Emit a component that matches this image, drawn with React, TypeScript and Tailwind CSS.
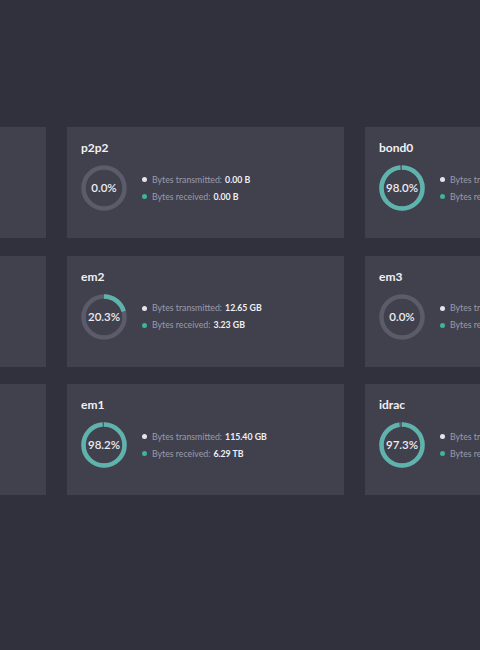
import React from 'react';

type Iface = {
  name: string;
  pct: number;
  tx: string;
  rx: string;
};

// left column is cut off by the window, it still gets real content
const rows: Iface[][] = [
  [
    { name: 'p2p1', pct: 0, tx: '0.00 B', rx: '0.00 B' },
    { name: 'p2p2', pct: 0, tx: '0.00 B', rx: '0.00 B' },
    { name: 'bond0', pct: 98.0, tx: '128.05 GB', rx: '6.29 TB' },
  ],
  [
    { name: 'lo', pct: 50.0, tx: '1.02 GB', rx: '1.02 GB' },
    { name: 'em2', pct: 20.3, tx: '12.65 GB', rx: '3.23 GB' },
    { name: 'em3', pct: 0, tx: '0.00 B', rx: '0.00 B' },
  ],
  [
    { name: 'em4', pct: 0, tx: '0.00 B', rx: '0.00 B' },
    { name: 'em1', pct: 98.2, tx: '115.40 GB', rx: '6.29 TB' },
    { name: 'idrac', pct: 97.3, tx: '2.10 GB', rx: '75.80 GB' },
  ],
];

const Ring: React.FC<{ pct: number }> = ({ pct }) => {
  const r = 20.5;
  const c = 2 * Math.PI * r;
  const len = (pct / 100) * c;
  return (
    <div className="relative w-[46px] h-[46px] shrink-0">
      <svg width="46" height="46" viewBox="0 0 46 46">
        <circle cx="23" cy="23" r={r} fill="none" stroke="#5b5b6a" strokeWidth="4.5" />
        {pct > 0 && (
          <circle
            cx="23"
            cy="23"
            r={r}
            fill="none"
            stroke="#5fb3ad"
            strokeWidth="4.5"
            strokeDasharray={`${len} ${c}`}
            transform="rotate(-90 23 23)"
          />
        )}
      </svg>
      <div className="absolute inset-0 flex items-center justify-center text-[11.5px] font-semibold text-[#ececf2]">
        {pct.toFixed(1)}%
      </div>
    </div>
  );
};

const Card: React.FC<{ data: Iface }> = ({ data }) => (
  <div className="h-[111px] bg-[#41414d] pl-[14px] pt-[12px]">
    <div className="text-[12px] font-bold text-[#f0f0f4] leading-[18px]">{data.name}</div>
    <div className="flex items-center mt-[8px]">
      <Ring pct={data.pct} />
      <div className="ml-[15px] flex flex-col gap-[5px] text-[8.75px] leading-[12px] whitespace-nowrap">
        <div className="flex items-center">
          <span className="w-[5px] h-[5px] rounded-full bg-[#e4e4ea] mr-[5px]" />
          <span className="text-[#9b9bab]">Bytes transmitted:</span>
          <span className="ml-[3px] font-bold text-[#f0f0f4]">{data.tx}</span>
        </div>
        <div className="flex items-center">
          <span className="w-[5px] h-[5px] rounded-full bg-[#3fb39b] mr-[5px]" />
          <span className="text-[#9b9bab]">Bytes received:</span>
          <span className="ml-[3px] font-bold text-[#f0f0f4]">{data.rx}</span>
        </div>
      </div>
    </div>
  </div>
);

export default function App() {
  return (
    <div
      className="w-[480px] h-[650px] overflow-hidden bg-[#31313d] pt-[127px]"
      style={{ fontFamily: 'Lato, "Open Sans", sans-serif' }}
    >
      <div className="ml-[-231px] grid grid-cols-[277px_277px_277px] gap-x-[21px] gap-y-[17.5px] w-[873px]">
        {rows.flat().map((d) => (
          <Card key={d.name} data={d} />
        ))}
      </div>
    </div>
  );
}
